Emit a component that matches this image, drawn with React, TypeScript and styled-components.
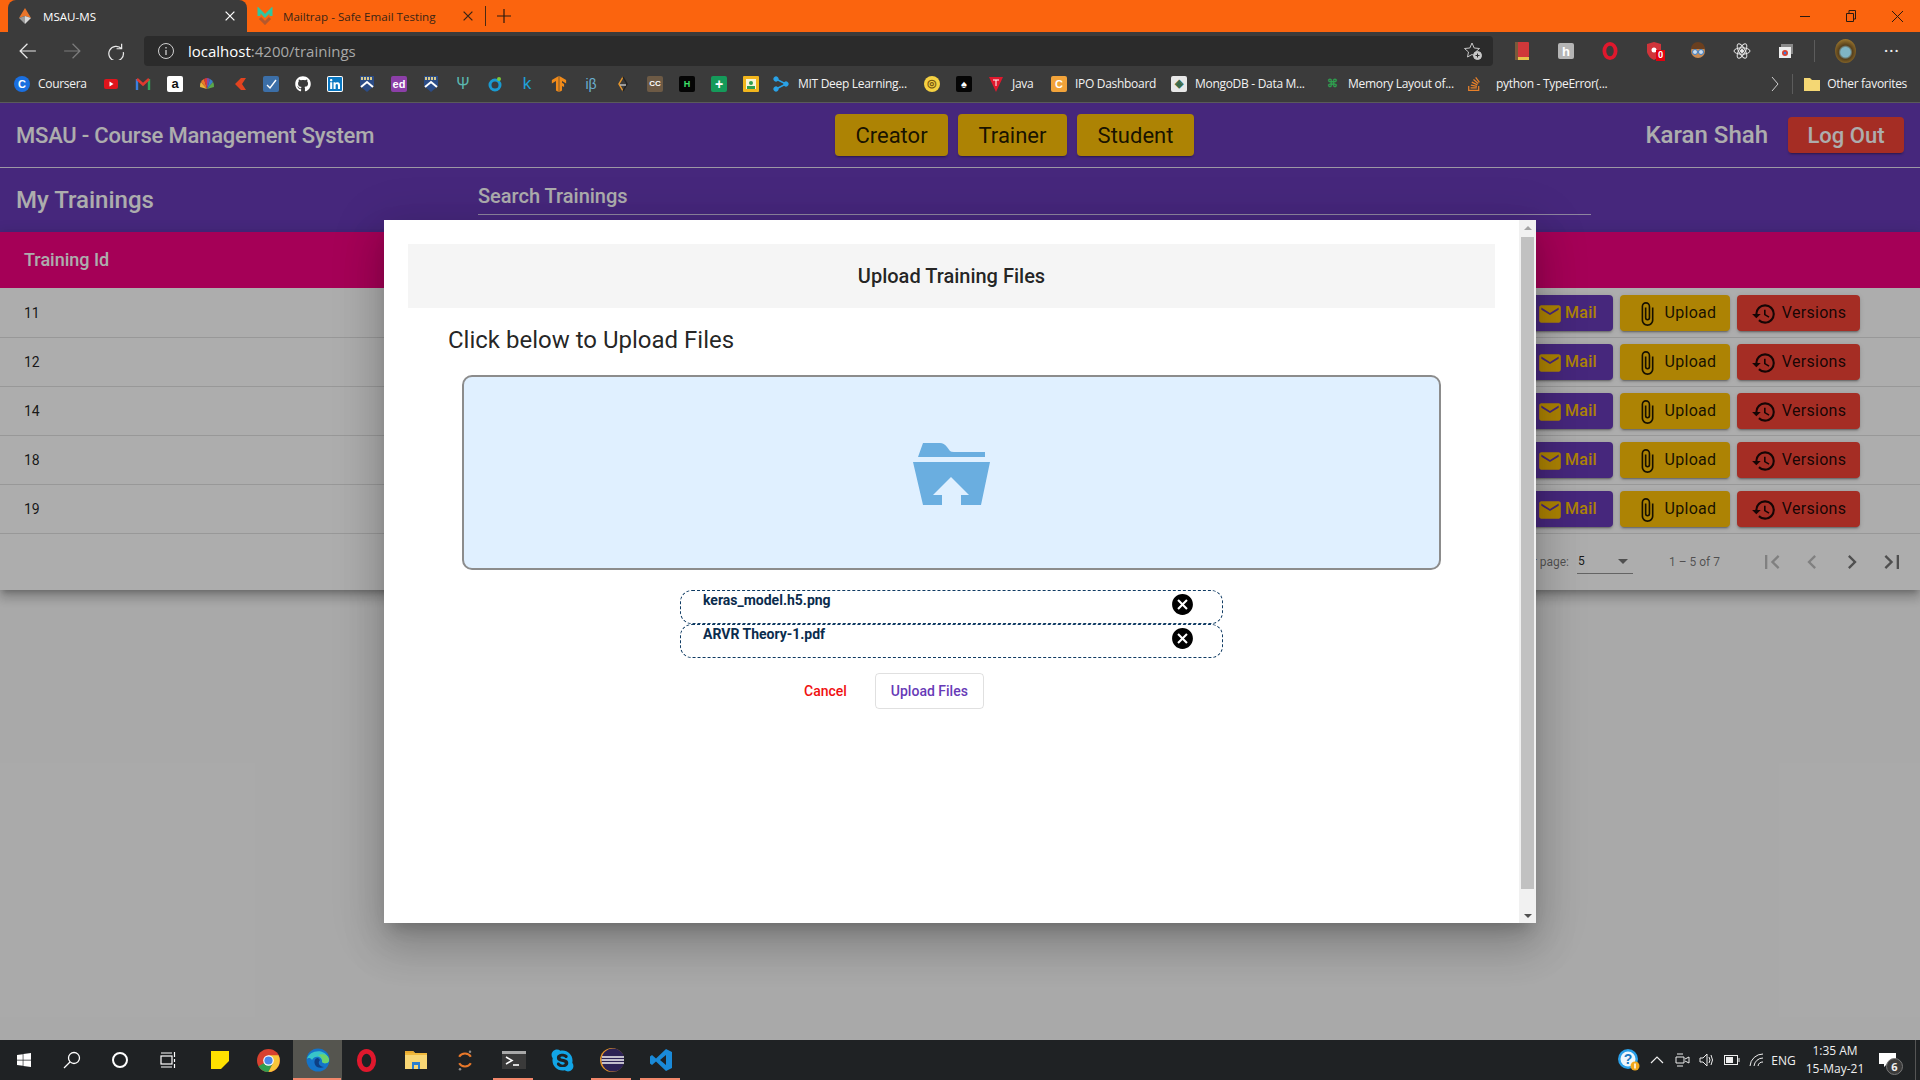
import React from "react";
import styled, { createGlobalStyle } from "styled-components";
import {
  MdAttachFile,
  MdCancel,
  MdChevronLeft,
  MdChevronRight,
  MdEmail,
  MdFirstPage,
  MdHistory,
  MdLastPage,
} from "react-icons/md";
import { FaGithub, FaLinkedin, FaSkype, FaStackOverflow, FaWindows } from "react-icons/fa";
import { SiTensorflow } from "react-icons/si";

const GlobalStyle = createGlobalStyle`
  html, body {
    margin: 0;
    padding: 0;
    height: 100%;
    overflow: hidden;
  }
  * {
    box-sizing: border-box;
  }
  #root {
    height: 100%;
  }
`;

const Shell = styled.div`
  display: flex;
  flex-direction: column;
  height: 100vh;
  font-family: Roboto, "Liberation Sans", sans-serif;
`;

/* browser chrome */

const TabStrip = styled.div`
  height: 32px;
  flex: none;
  background: #fb640e;
  display: flex;
  align-items: stretch;
  padding-left: 8px;
  font-family: "Open Sans", "Liberation Sans", sans-serif;
  font-size: 11.6px;
`;

const Tab = styled.div<{ $active?: boolean }>`
  width: ${(p) => (p.$active ? "239px" : "238px")};
  display: flex;
  align-items: center;
  padding: 0 12px 0 ${(p) => (p.$active ? "9px" : "10px")};
  gap: 10px;
  border-radius: 8px 8px 0 0;
  background: ${(p) => (p.$active ? "#3b3b3b" : "transparent")};
  color: ${(p) => (p.$active ? "#fff" : "#3a2415")};
`;

const TabTitle = styled.span`
  flex: 1;
  white-space: nowrap;
`;

const TabDivider = styled.div`
  width: 1px;
  height: 20px;
  background: #4a2a12;
  align-self: center;
`;

const NewTab = styled.div`
  width: 36px;
  display: flex;
  align-items: center;
  justify-content: center;
  color: #2b1a10;
`;

const WindowControls = styled.div`
  margin-left: auto;
  display: flex;
  align-items: center;
  color: #2b1a10;
`;

const WindowButton = styled.div`
  width: 46px;
  height: 32px;
  display: flex;
  align-items: center;
  justify-content: center;
`;

const Toolbar = styled.div`
  height: 38px;
  flex: none;
  background: #3b3b3b;
  display: flex;
  align-items: center;
  padding: 0 0 0 6px;
`;

const NavButton = styled.div`
  width: 44px;
  display: flex;
  justify-content: center;
`;

const AddressBar = styled.div`
  margin-left: 6px;
  width: 1349px;
  height: 30px;
  border-radius: 4px;
  background: #2b2b2b;
  display: flex;
  align-items: center;
  padding: 0 10px 0 14px;
  gap: 14px;
  font-family: "Open Sans", "Liberation Sans", sans-serif;
  font-size: 15px;
  color: #a8a8a8;
`;

const AddressText = styled.span`
  flex: 1;
`;

const Host = styled.span`
  color: #fff;
`;

const ExtensionRow = styled.div`
  display: flex;
  align-items: center;
  padding: 0 6px 0 7px;
`;

const Extension = styled.div`
  width: 44px;
  display: flex;
  justify-content: center;
  align-items: center;
  position: relative;
`;

const ExtensionBadge = styled.span`
  position: absolute;
  top: 8px;
  left: 24px;
  width: 9px;
  height: 11px;
  background: #e3000f;
  color: #fff;
  font-size: 9px;
  font-weight: 700;
  line-height: 11px;
  text-align: center;
`;

const ToolbarDivider = styled.div`
  width: 1px;
  height: 22px;
  background: #5c5c5c;
`;

const Avatar = styled.div`
  width: 21px;
  height: 24px;
  margin: 0 28px 0 20px;
  border-radius: 50%;
  background: radial-gradient(circle at 50% 55%, #7fb4c4 0 28%, #57401c 42%, #c79a3a 100%);
`;

const Dots = styled.span`
  color: #eee;
  font-size: 14px;
  letter-spacing: 1px;
  line-height: 10px;
  font-weight: 700;
`;

const BookmarkBar = styled.div`
  height: 33px;
  flex: none;
  background: #3b3b3b;
  border-bottom: 1px solid #5a5a5a;
  display: flex;
  align-items: center;
  padding: 0 0 5px 14px;
  font-family: "Open Sans", "Liberation Sans", sans-serif;
  font-size: 12px;
  letter-spacing: -0.3px;
  color: #f2f2f2;
`;

const Bookmark = styled.div<{ $width?: number; $pad?: number; $gap?: number }>`
  width: ${(p) => p.$width ?? 32}px;
  flex: none;
  display: flex;
  align-items: center;
  justify-content: ${(p) => (p.$width ? "flex-start" : "center")};
  padding-left: ${(p) => p.$pad ?? 0}px;
  gap: ${(p) => p.$gap ?? 8}px;
  white-space: nowrap;
`;

const Glyph = styled.span<{ $bg?: string; $fg?: string; $round?: boolean; $size?: number; $weight?: number }>`
  width: 16px;
  height: 16px;
  flex: none;
  display: inline-flex;
  align-items: center;
  justify-content: center;
  border-radius: ${(p) => (p.$round ? "50%" : "2px")};
  background: ${(p) => p.$bg ?? "transparent"};
  color: ${(p) => p.$fg ?? "#fff"};
  font-family: "Liberation Sans", sans-serif;
  font-size: ${(p) => p.$size ?? 11}px;
  font-weight: ${(p) => p.$weight ?? 700};
  letter-spacing: 0;
`;

const BookmarkEnd = styled.div`
  margin-left: auto;
  display: flex;
  align-items: center;
  gap: 7px;
  padding-right: 13px;
`;

const BarDivider = styled.div`
  width: 1px;
  height: 20px;
  background: #5c5c5c;
  margin: 0 4px 0 2px;
`;

/* the app behind the dialog */

const PageArea = styled.div`
  flex: 1;
  position: relative;
  overflow: hidden;
  background: #fafafa;
`;

const AppBar = styled.header`
  height: 65px;
  background: #673ab7;
  border-bottom: 1px solid #e8e0f4;
  display: flex;
  align-items: center;
  color: #fff;
  padding: 0 16px;
`;

const AppTitle = styled.h1`
  margin: 0;
  width: 819px;
  font-size: 22px;
  font-weight: 500;
  letter-spacing: -0.2px;
`;

const RoleButtons = styled.div`
  display: flex;
  gap: 10px;
`;

const RoleButton = styled.div<{ $width: number }>`
  width: ${(p) => p.$width}px;
  height: 42px;
  border-radius: 4px;
  background: #ffc107;
  color: rgba(0, 0, 0, 0.87);
  font-size: 22px;
  font-weight: 400;
  display: flex;
  align-items: center;
  justify-content: center;
  box-shadow: 0 3px 1px -2px rgba(0, 0, 0, 0.2), 0 2px 2px rgba(0, 0, 0, 0.14);
`;

const UserName = styled.span`
  margin-left: auto;
  font-size: 24px;
  font-weight: 500;
`;

const LogOut = styled.div`
  margin-left: 20px;
  width: 116px;
  height: 36px;
  border-radius: 4px;
  background: #f44336;
  color: #fff;
  font-size: 22px;
  font-weight: 500;
  display: flex;
  align-items: center;
  justify-content: center;
  box-shadow: 0 3px 1px -2px rgba(0, 0, 0, 0.2), 0 2px 2px rgba(0, 0, 0, 0.14);
`;

const SubBar = styled.div`
  height: 64px;
  background: #673ab7;
  color: #fff;
  display: flex;
  padding-left: 16px;
`;

const SubTitle = styled.h2`
  margin: 0;
  width: 462px;
  font-size: 24px;
  font-weight: 500;
  line-height: 64px;
`;

const SearchField = styled.div`
  width: 1113px;
  height: 47px;
  border-bottom: 1px solid rgba(255, 255, 255, 0.7);
  font-size: 20px;
  font-weight: 500;
  line-height: 56px;
  color: #fff;
`;

const TablePaper = styled.div`
  background: #fff;
  box-shadow: 0 5px 5px -3px rgba(0, 0, 0, 0.2), 0 8px 10px 1px rgba(0, 0, 0, 0.14),
    0 3px 14px 2px rgba(0, 0, 0, 0.12);
`;

const TableHead = styled.div`
  height: 57px;
  background: #f30080;
  border-bottom: 1px solid #fff;
  color: #fff;
  font-size: 18px;
  font-weight: 500;
  display: flex;
  align-items: center;
  padding: 0 0 2px 24px;
`;

const Row = styled.div`
  height: 49px;
  border-bottom: 1px solid rgba(0, 0, 0, 0.12);
  display: flex;
  align-items: center;
  padding: 0 60px 0 24px;
  font-size: 14px;
  color: rgba(0, 0, 0, 0.87);
`;

const RowId = styled.span`
  flex: 1;
`;

const RowActions = styled.div`
  display: flex;
  gap: 7px;
`;

const ActionButton = styled.div<{ $bg: string; $fg: string; $width: number; $tight?: boolean }>`
  width: ${(p) => p.$width}px;
  height: 36px;
  border-radius: 4px;
  background: ${(p) => p.$bg};
  color: ${(p) => p.$fg};
  font-size: 16px;
  font-weight: ${(p) => (p.$tight ? 500 : 400)};
  letter-spacing: 0.3px;
  display: flex;
  align-items: center;
  justify-content: center;
  gap: ${(p) => (p.$tight ? "2px" : "5px")};
  padding-bottom: 2px;
  box-shadow: 0 3px 1px -2px rgba(0, 0, 0, 0.2), 0 2px 2px rgba(0, 0, 0, 0.14),
    0 1px 5px rgba(0, 0, 0, 0.12);

  svg {
    font-size: 26px;
    flex: none;
    margin-top: 4px;
  }
`;

const Paginator = styled.div`
  height: 56px;
  display: flex;
  align-items: center;
  justify-content: flex-end;
  padding-right: 8px;
  font-size: 12px;
  color: rgba(0, 0, 0, 0.54);
`;

const PageSize = styled.div`
  width: 56px;
  margin: 0 36px 0 8px;
  padding: 0 5px 5px 1px;
  border-bottom: 1px solid rgba(0, 0, 0, 0.42);
  display: flex;
  justify-content: space-between;
  align-items: center;
  color: rgba(0, 0, 0, 0.87);
  position: relative;
  top: 2px;
`;

const SelectCaret = styled.span`
  width: 0;
  height: 0;
  border-left: 5px solid transparent;
  border-right: 5px solid transparent;
  border-top: 5px solid rgba(0, 0, 0, 0.54);
`;

const PageRange = styled.span`
  margin-right: 32px;
`;

const PageIcon = styled.div<{ $dim?: boolean }>`
  width: 40px;
  height: 40px;
  display: flex;
  align-items: center;
  justify-content: center;
  font-size: 28px;
  color: ${(p) => (p.$dim ? "rgba(0,0,0,0.26)" : "rgba(0,0,0,0.54)")};
`;

/* dialog */

const Backdrop = styled.div`
  position: absolute;
  inset: 0;
  background: rgba(0, 0, 0, 0.32);
  display: flex;
  align-items: center;
  justify-content: center;
`;

const Dialog = styled.div`
  width: 1152px;
  height: 703px;
  background: #fff;
  display: flex;
  box-shadow: 0 11px 15px -7px rgba(0, 0, 0, 0.2), 0 24px 38px 3px rgba(0, 0, 0, 0.14),
    0 9px 46px 8px rgba(0, 0, 0, 0.12);
`;

const DialogBody = styled.div`
  flex: 1;
  padding: 24px;
  min-width: 0;
`;

const DialogHeader = styled.div`
  height: 64px;
  background: #f5f5f5;
  color: rgba(0, 0, 0, 0.87);
  font-size: 20px;
  font-weight: 500;
  display: flex;
  align-items: center;
  justify-content: center;
`;

const DialogLead = styled.h3`
  margin: 16px 0 0 40px;
  font-size: 24px;
  line-height: 32px;
  font-weight: 400;
  color: rgba(0, 0, 0, 0.87);
`;

const DropZone = styled.div`
  width: 979px;
  height: 195px;
  margin: 19px auto 0;
  padding-top: 3px;
  background: #e0f0ff;
  border: 2px solid #8c8c8c;
  border-radius: 10px;
  display: flex;
  align-items: center;
  justify-content: center;
`;

const FileList = styled.div`
  width: 543px;
  margin: 20px auto 0;
  display: flex;
  flex-direction: column;
`;

const FileItem = styled.div`
  height: 34px;
  border: 1px dashed #0f3b63;
  border-radius: 12px;
  padding: 1px 27px 0 22px;
  display: flex;
  justify-content: space-between;
  font-size: 14px;
  font-weight: 700;
  line-height: 16px;
  color: #0b2c4d;
  white-space: nowrap;

  svg {
    font-size: 25px;
    color: #000;
  }
`;

const DialogActions = styled.div`
  display: flex;
  align-items: center;
  gap: 12px;
  margin: 15px 0 0 380px;
`;

const TextButton = styled.div`
  height: 36px;
  padding: 0 16px;
  display: flex;
  align-items: center;
  color: #f01010;
  font-size: 14px;
  font-weight: 500;
`;

const OutlineButton = styled.div`
  height: 36px;
  width: 109px;
  display: flex;
  align-items: center;
  justify-content: center;
  border: 1px solid rgba(0, 0, 0, 0.12);
  border-radius: 4px;
  color: #673ab7;
  font-size: 14px;
  font-weight: 500;
`;

const ScrollTrack = styled.div`
  width: 17px;
  flex: none;
  background: #f1f1f1;
  display: flex;
  flex-direction: column;
  align-items: center;
`;

const ScrollArrow = styled.div<{ $down?: boolean }>`
  width: 0;
  height: 0;
  margin: ${(p) => (p.$down ? "auto 0 5px" : "6px 0 5px")};
  border-left: 4px solid transparent;
  border-right: 4px solid transparent;
  ${(p) => (p.$down ? "border-top: 4px solid #505050;" : "border-bottom: 4px solid #a3a3a3;")}
`;

const ScrollThumb = styled.div`
  width: 13px;
  height: 652px;
  margin-top: 2px;
  background: #c1c1c1;
`;

/* taskbar */

const Taskbar = styled.footer`
  height: 40px;
  flex: none;
  background: #1f2224;
  display: flex;
  align-items: stretch;
  color: #fff;
  font-family: "Open Sans", "Liberation Sans", sans-serif;
`;

const SystemCell = styled.div`
  width: 48px;
  flex: none;
  display: flex;
  align-items: center;
  justify-content: center;
`;

const AppGroup = styled.div`
  display: flex;
  padding-left: 3px;
`;

const TaskCell = styled.div<{ $active?: boolean; $running?: boolean }>`
  width: 49px;
  flex: none;
  display: flex;
  align-items: center;
  justify-content: center;
  position: relative;
  background: ${(p) => (p.$active ? "#55554f" : "transparent")};

  &::after {
    content: "";
    display: ${(p) => (p.$running || p.$active ? "block" : "none")};
    position: absolute;
    bottom: 0;
    height: 2px;
    left: ${(p) => (p.$active ? "0" : "4px")};
    right: ${(p) => (p.$active ? "1px" : "5px")};
    background: #f2876b;
  }
`;

const TrayGroup = styled.div`
  margin-left: auto;
  display: flex;
  align-items: center;
  padding-right: 4px;
  font-size: 12px;
  color: #f0f0f0;
`;

const TrayIcon = styled.div<{ $width?: number }>`
  width: ${(p) => p.$width ?? 25}px;
  display: flex;
  justify-content: center;
  align-items: center;
`;

const Clock = styled.div`
  width: 60px;
  margin-left: 7px;
  text-align: center;
  line-height: 18px;
  font-size: 12px;
  white-space: nowrap;
`;

const Notifications = styled.div`
  width: 49px;
  height: 40px;
  margin-left: 2px;
  padding-right: 8px;
  border-right: 1px solid #555;
  position: relative;
  display: flex;
  align-items: center;
  justify-content: center;
`;

const NotifyCount = styled.span`
  position: absolute;
  left: 19px;
  top: 18px;
  width: 17px;
  height: 17px;
  border-radius: 50%;
  background: #3a3a3a;
  border: 1px solid #777;
  font-size: 11px;
  font-weight: 700;
  line-height: 15px;
  text-align: center;
`;

/* small drawings */

const FolderUpload = () => (
  <svg width="78" height="63" viewBox="0 0 78 63" fill="#6aaee0">
    <path d="M10 0 H27 Q31 0 34 4 L37 8 Q38 9 41 9 L72 9 V14 H5 z" />
    <path d="M0 19 H77 L68 62 H48 V52 H56 L38 34 L20 52 H29 V62 H10 z" />
  </svg>
);

const MsauFavicon = () => (
  <svg width="16" height="18" viewBox="0 0 16 18">
    <path d="M8 1 L14 11 L8 9 L2 11 z" fill="#e8742a" />
    <path d="M2 11 L8 9 V17 z" fill="#9a9a9a" />
    <path d="M14 11 L8 9 V17 z" fill="#d8d8d8" />
  </svg>
);

const MailtrapFavicon = () => (
  <svg width="16" height="18" viewBox="0 0 16 18" fill="none" strokeWidth="3">
    <path d="M2 9 V3 L8 9 L14 3 V9" stroke="#2fc6a0" />
    <path d="M3 11 L8 16 L13 11" stroke="#b5582c" />
  </svg>
);

const Stroke = ({ d, size = 16, color = "#fff", width = 1.4 }: { d: string; size?: number; color?: string; width?: number }) => (
  <svg width={size} height={size} viewBox="0 0 16 16" fill="none" stroke={color} strokeWidth={width}>
    <path d={d} />
  </svg>
);

const TabClose = () => <Stroke size={10} d="M1 1 L15 15 M15 1 L1 15" color="currentColor" width={2} />;

const Shield = () => (
  <svg width="16" height="18" viewBox="0 0 16 18">
    <path d="M1 1 H15 V11 L8 17 L1 11 z" fill="#2b4c86" />
    <path d="M2 12 L8 7 L14 12" stroke="#fff" strokeWidth="2" fill="none" />
    <path d="M2 3.500 H14" stroke="#d8c98c" strokeWidth="3" strokeDasharray="2 1" />
  </svg>
);

const Peacock = () => (
  <svg width="18" height="16" viewBox="0 0 18 16">
    <path d="M9 13 L2 11 A7 7 0 0 1 3 6 z" fill="#e8b53a" />
    <path d="M9 13 L3 6 A7 7 0 0 1 6 3 z" fill="#e8782a" />
    <path d="M9 13 L6 3 A7 7 0 0 1 9 2 z" fill="#d8383a" />
    <path d="M9 13 L9 2 A7 7 0 0 1 12 3 z" fill="#7a4fa8" />
    <path d="M9 13 L12 3 A7 7 0 0 1 15 6 z" fill="#3a7fc8" />
    <path d="M9 13 L15 6 A7 7 0 0 1 16 11 z" fill="#5aa84a" />
  </svg>
);

const ChromeLogo = () => (
  <svg width="23" height="23" viewBox="0 0 24 24">
    <circle cx="12" cy="12" r="12" fill="#d8412f" />
    <path d="M12 12 L1.600 18 A12 12 0 0 0 12 24 L17 14 z" fill="#2f9e4f" />
    <path d="M12 6.500 H22.400 A12 12 0 0 1 12 24 L17 14 z" fill="#f7c63a" />
    <circle cx="12" cy="12" r="5.500" fill="#fff" />
    <circle cx="12" cy="12" r="4.300" fill="#4a86e8" />
  </svg>
);

const EdgeLogo = () => (
  <svg width="24" height="24" viewBox="0 0 24 24">
    <circle cx="12" cy="12" r="11.500" fill="#1473c8" />
    <path d="M1 11 C3 2 20 -1 23 12 C23 16 18 16 16 14 C17 9 9 6 6 12 C4 9 2 10 1 11 z" fill="#38c5c9" />
    <path d="M23 12 C23 16 18 16 16 14 C17 11 15 8 12 7 C17 5 23 7 23 12 z" fill="#6cd36c" />
    <path d="M12 10 C8 10 7 16 11 19 C13 20 16 20 18 19 C14 19 11 15 14 12 z" fill="#0d3f84" />
  </svg>
);

const OperaLogo = ({ size = 23 }: { size?: number }) => (
  <svg width={size} height={size} viewBox="0 0 24 24" fill="none">
    <ellipse cx="12" cy="12" rx="7.500" ry="9.500" stroke="#e0182d" strokeWidth="5" />
  </svg>
);

const FolderLogo = () => (
  <svg width="22" height="18" viewBox="0 0 22 18">
    <path d="M0 0 H8 L10 2 H22 V18 H0 z" fill="#f8d775" />
    <path d="M0 0 H8 L10 2 H0 z" fill="#e8a92e" />
    <rect y="2" width="22" height="2" fill="#f0b93c" />
    <path d="M7 18 V11 H15 V18 h-2 v-4 h-4 v4 z" fill="#2a7fd0" />
  </svg>
);

const JupyterLogo = () => (
  <svg width="20" height="24" viewBox="0 0 24 26" fill="none">
    <path d="M5 9 C8 4 16 4 19 9" stroke="#e8782a" strokeWidth="2.500" />
    <path d="M5 17 C8 22 16 22 19 17" stroke="#e8782a" strokeWidth="2.500" />
    <circle cx="18" cy="3" r="1.500" fill="#8a8a8a" />
    <circle cx="6" cy="24" r="1.500" fill="#8a8a8a" />
  </svg>
);

const TerminalLogo = () => (
  <svg width="24" height="18" viewBox="0 0 24 18">
    <rect width="24" height="18" fill="#3a3a3a" />
    <rect width="24" height="3" fill="#a8a8a8" />
    <path d="M4 6 L10 9.500 L4 13" stroke="#fff" strokeWidth="1.600" fill="none" />
    <path d="M11 14 H17" stroke="#fff" strokeWidth="1.600" />
  </svg>
);

const EclipseLogo = () => (
  <svg width="24" height="24" viewBox="0 0 24 24">
    <circle cx="12" cy="12" r="12" fill="#e8962a" />
    <circle cx="13" cy="12" r="11.500" fill="#2c2255" />
    <path d="M2 9 H24 M1.500 12 H24.500 M2 15 H24" stroke="#f2f2f2" strokeWidth="1.500" />
  </svg>
);

const VsCodeLogo = () => (
  <svg width="24" height="24" viewBox="0 0 24 24">
    <path d="M17 1 L23 4 V20 L17 23 L7 13.500 L3 17 L1 15.500 V8.500 L3 7 L7 10.500 z M17 7 L11 12 L17 17 z" fill="#1a8ad8" fillRule="evenodd" />
  </svg>
);

const ProfileExt = () => (
  <svg width="16" height="20" viewBox="0 0 16 20">
    <circle cx="8" cy="10" r="7" fill="#c88a52" />
    <path d="M1 8 A7 7 0 0 1 15 8 z" fill="#6a3f1f" />
    <circle cx="5" cy="11" r="2.500" fill="#cde" stroke="#3a7fc8" />
    <circle cx="11" cy="11" r="2.500" fill="#cde" stroke="#3a7fc8" />
  </svg>
);

const ReactExt = () => (
  <svg width="18" height="18" viewBox="0 0 18 18" fill="none" stroke="#e8e8e8">
    <ellipse cx="9" cy="9" rx="8" ry="3.200" />
    <ellipse cx="9" cy="9" rx="8" ry="3.200" transform="rotate(60 9 9)" />
    <ellipse cx="9" cy="9" rx="8" ry="3.200" transform="rotate(120 9 9)" />
    <circle cx="9" cy="9" r="1.500" fill="#e8e8e8" />
  </svg>
);

const HelpIcon = () => (
  <svg width="22" height="22" viewBox="0 0 22 22">
    <circle cx="10" cy="10" r="10" fill="#2aa0e8" />
    <circle cx="10" cy="10" r="7.500" fill="#eef7fc" />
    <text x="10" y="15" textAnchor="middle" fontSize="14" fontWeight="700" fontFamily="Liberation Sans" fill="#1a78c2">?</text>
    <circle cx="17" cy="17" r="4.500" fill="#f2a81d" />
    <path d="M17 14.500 V19.500" stroke="#fff" strokeWidth="1.500" />
  </svg>
);

const NetworkIcon = () => (
  <svg width="16" height="16" viewBox="0 0 16 16" stroke="#2aa3e8" fill="#2aa3e8">
    <path d="M3 3 L13 8 L3 13" fill="none" strokeWidth="1.500" />
    <circle cx="3" cy="3" r="2.200" />
    <circle cx="13" cy="8" r="2.200" />
    <circle cx="3" cy="13" r="2.200" />
  </svg>
);

const bookmarkIcons: React.ReactNode[] = [
  <svg width="16" height="16" viewBox="0 0 16 16" key="yt"><rect x="1" y="3" width="14" height="10" rx="2" fill="#e0141c" /><path d="M6.500 5.500 L10.500 8 L6.500 10.500 z" fill="#fff" /></svg>,
  <svg width="16" height="16" viewBox="0 0 16 16" key="gm" fill="none" strokeWidth="2.400"><path d="M2 14 V3" stroke="#3a7fe0" /><path d="M14 14 V3" stroke="#2fa85a" /><path d="M2 3 L8 8.500 L14 3" stroke="#e0392f" /></svg>,
  <Glyph key="amz" $bg="#fff" $fg="#111" $size={13}>a</Glyph>,
  <Peacock key="nbc" />,
  <svg width="16" height="16" viewBox="0 0 16 16" key="ch"><path d="M10 2 H15 L11 8 L15 14 H10 L4 8 z" fill="#e2431f" /></svg>,
  <Glyph key="doc" $bg="#3c6fa8"><Stroke d="M4 9 L7 12 L13 4" /></Glyph>,
  <FaGithub key="gh" size={16} color="#fff" />,
  <Glyph key="li" $bg="#fff"><FaLinkedin size={16} color="#0a78c2" /></Glyph>,
  <Shield key="y1" />,
  <Glyph key="ed" $bg="#8c3fa8">ed</Glyph>,
  <Shield key="y2" />,
  <Glyph key="psi" $fg="#5ab8b0" $size={16} $weight={400}>Ψ</Glyph>,
  <svg width="16" height="16" viewBox="0 0 16 16" key="ring" fill="none"><circle cx="8" cy="9" r="5" stroke="#1a9ad0" strokeWidth="3" /><circle cx="12" cy="3" r="2" fill="#7ac83a" /></svg>,
  <Glyph key="kg" $fg="#20a0d8" $size={17} $weight={400}>k</Glyph>,
  <SiTensorflow key="tf" size={16} color="#f08a1a" />,
  <Glyph key="ib" $fg="#6ab0d0" $size={14} $weight={400}>iβ</Glyph>,
  <svg width="16" height="16" viewBox="0 0 16 16" key="dia" fill="none" strokeWidth="1.500"><path d="M8 1 L4 8 L8 15" stroke="#e8962a" /><path d="M8 1 L12 8 L8 15" stroke="#222" /><path d="M5 9 H11" stroke="#bbb" /></svg>,
  <Glyph key="cc" $bg="#6d5a45" $size={8}>CC</Glyph>,
  <Glyph key="hn" $bg="#050505" $fg="#3fe06a" $size={9}>H</Glyph>,
  <Glyph key="plus" $bg="#159a5a" $size={14}>+</Glyph>,
  <svg width="16" height="16" viewBox="0 0 16 16" key="gc"><rect width="16" height="16" rx="1" fill="#f2b61d" /><rect x="3" y="3" width="10" height="10" fill="#f8f4d8" /><circle cx="8" cy="7" r="2" fill="#2f9e4f" /><rect x="4" y="10" width="8" height="3" fill="#2f9e4f" /></svg>,
];

const trainingIds = [11, 12, 14, 18, 19];

export default function App() {
  return (
    <Shell>
      <GlobalStyle />

      <TabStrip>
        <Tab $active>
          <MsauFavicon />
          <TabTitle>MSAU-MS</TabTitle>
          <TabClose />
        </Tab>
        <Tab>
          <MailtrapFavicon />
          <TabTitle>Mailtrap - Safe Email Testing</TabTitle>
          <TabClose />
        </Tab>
        <TabDivider />
        <NewTab>
          <svg width="14" height="14" viewBox="0 0 14 14" stroke="currentColor" strokeWidth="1.200"><path d="M7 0 V14 M0 7 H14" /></svg>
        </NewTab>
        <WindowControls>
          <WindowButton>
            <svg width="10" height="10" viewBox="0 0 10 10" stroke="currentColor"><path d="M0 5.500 H10" /></svg>
          </WindowButton>
          <WindowButton>
            <svg width="10" height="12" viewBox="0 0 10 12" fill="none" stroke="currentColor"><path d="M0.500 3.500 H7.500 V11.500 H0.500 z M3 3 V0.500 H9.500 V9 H8" /></svg>
          </WindowButton>
          <WindowButton>
            <svg width="11" height="11" viewBox="0 0 11 11" stroke="currentColor"><path d="M0 0 L11 11 M11 0 L0 11" /></svg>
          </WindowButton>
        </WindowControls>
      </TabStrip>

      <Toolbar>
        <NavButton><Stroke size={18} color="#e8e8e8" width={1.1} d="M15 8 H1 M7.500 1.500 L1 8 L7.500 14.500" /></NavButton>
        <NavButton><Stroke size={18} color="#7c7c7c" width={1.1} d="M1 8 H15 M8.500 1.500 L15 8 L8.500 14.500" /></NavButton>
        <NavButton><Stroke size={18} color="#e8e8e8" width={1.1} d="M13 1.500 V6 H8.500 M13 6 A6.500 6.500 0 1 0 14.500 9" /></NavButton>
        <AddressBar>
          <svg width="16" height="16" viewBox="0 0 16 16" fill="none" stroke="#d0d0d0">
            <circle cx="8" cy="8" r="7.500" />
            <path d="M8 7 V12 M8 4 V5.500" strokeWidth="1.300" />
          </svg>
          <AddressText>
            <Host>localhost</Host>:4200/trainings
          </AddressText>
          <svg width="20" height="20" viewBox="0 0 20 20" fill="none" stroke="#c8c8c8">
            <path d="M9 2 L11.200 7 L16.500 7.500 L12.500 11 L13.500 16 L9 13.500 L4.500 16 L5.500 11 L1.500 7.500 L6.800 7 z" />
            <circle cx="14.500" cy="14.500" r="4" fill="#c8c8c8" />
            <path d="M14.500 12.500 V16.500 M12.500 14.500 H16.500" stroke="#2b2b2b" />
          </svg>
        </AddressBar>
        <ExtensionRow>
          <Extension>
            <svg width="14" height="18" viewBox="0 0 14 18"><rect width="14" height="15" rx="1" fill="#d0383a" /><rect y="15" width="14" height="3" fill="#e8c24a" /><rect width="3" height="18" fill="#7a5a3a" /></svg>
          </Extension>
          <Extension>
            <Glyph $bg="#b5b5b5" $size={13}>h</Glyph>
          </Extension>
          <Extension><OperaLogo size={18} /></Extension>
          <Extension>
            <svg width="16" height="18" viewBox="0 0 16 18"><path d="M1 2 L8 0 L15 2 V10 Q14 15 8 18 Q2 15 1 10 z" fill="#d0343a" /><circle cx="8" cy="8" r="2.500" fill="#fff" /></svg>
            <ExtensionBadge>0</ExtensionBadge>
          </Extension>
          <Extension><ProfileExt /></Extension>
          <Extension><ReactExt /></Extension>
          <Extension>
            <svg width="16" height="16" viewBox="0 0 16 16"><rect x="3" y="1" width="12" height="10" fill="#8a8a8a" /><rect x="1" y="4" width="12" height="11" fill="#eee" /><circle cx="7" cy="10" r="3" fill="#d8412f" /><circle cx="7" cy="10" r="1.300" fill="#3a7fe0" /></svg>
          </Extension>
        </ExtensionRow>
        <ToolbarDivider />
        <Avatar />
        <Dots>···</Dots>
      </Toolbar>

      <BookmarkBar>
        <Bookmark $width={81}>
          <Glyph $bg="#1a6fe0" $round>C</Glyph>
          Coursera
        </Bookmark>
        {bookmarkIcons.map((icon, i) => (
          <Bookmark key={i}>{icon}</Bookmark>
        ))}
        <Bookmark $width={149} $pad={6} $gap={9}>
          <NetworkIcon />
          MIT Deep Learning...
        </Bookmark>
        <Bookmark><Glyph $bg="#f5d142" $fg="#7a5a10" $round>◎</Glyph></Bookmark>
        <Bookmark><Glyph $bg="#050505">♠</Glyph></Bookmark>
        <Bookmark $width={63} $pad={8}>
          <svg width="16" height="16" viewBox="0 0 16 16"><path d="M1 1 H15 L8 16 z" fill="#e0182d" /><path d="M5 4 H11 M8 4 V10" stroke="#fff" /></svg>
          Java
        </Bookmark>
        <Bookmark $width={120} $pad={8}>
          <Glyph $bg="#f2a33a">C</Glyph>
          IPO Dashboard
        </Bookmark>
        <Bookmark $width={153} $pad={8}>
          <Glyph $bg="#e8e8e8" $fg="#3a6a4a">◈</Glyph>
          MongoDB - Data M...
        </Bookmark>
        <Bookmark $width={142} $pad={8}>
          <Glyph $fg="#2f9e4f">⌘</Glyph>
          Memory Layout of...
        </Bookmark>
        <Bookmark $width={150} $pad={8} $gap={14}>
          <FaStackOverflow size={16} color="#e8812a" />
          python - TypeError(...
        </Bookmark>
        <BookmarkEnd>
          <Stroke size={16} color="#d0d0d0" d="M5 1 L11 8 L5 15" width={1} />
          <BarDivider />
          <svg width="16" height="16" viewBox="0 0 16 16"><path d="M0 2 H6 L8 4 H16 V15 H0 z" fill="#f4d774" /></svg>
          Other favorites
        </BookmarkEnd>
      </BookmarkBar>

      <PageArea>
        <AppBar>
          <AppTitle>MSAU - Course Management System</AppTitle>
          <RoleButtons>
            <RoleButton $width={113}>Creator</RoleButton>
            <RoleButton $width={109}>Trainer</RoleButton>
            <RoleButton $width={117}>Student</RoleButton>
          </RoleButtons>
          <UserName>Karan Shah</UserName>
          <LogOut>Log Out</LogOut>
        </AppBar>
        <SubBar>
          <SubTitle>My Trainings</SubTitle>
          <SearchField>Search Trainings</SearchField>
        </SubBar>
        <TablePaper>
          <TableHead>Training Id</TableHead>
          {trainingIds.map((id) => (
            <Row key={id}>
              <RowId>{id}</RowId>
              <RowActions>
                <ActionButton $bg="#673ab7" $fg="#ffc107" $width={92} $tight>
                  <MdEmail />
                  Mail
                </ActionButton>
                <ActionButton $bg="#ffc107" $fg="rgba(0,0,0,0.87)" $width={110}>
                  <MdAttachFile />
                  Upload
                </ActionButton>
                <ActionButton $bg="#f44336" $fg="rgba(0,0,0,0.87)" $width={123}>
                  <MdHistory />
                  Versions
                </ActionButton>
              </RowActions>
            </Row>
          ))}
          <Paginator>
            <span>Items per page:</span>
            <PageSize>
              5
              <SelectCaret />
            </PageSize>
            <PageRange>1 – 5 of 7</PageRange>
            <PageIcon $dim><MdFirstPage /></PageIcon>
            <PageIcon $dim><MdChevronLeft /></PageIcon>
            <PageIcon><MdChevronRight /></PageIcon>
            <PageIcon><MdLastPage /></PageIcon>
          </Paginator>
        </TablePaper>

        <Backdrop>
          <Dialog>
            <DialogBody>
              <DialogHeader>Upload Training Files</DialogHeader>
              <DialogLead>Click below to Upload Files</DialogLead>
              <DropZone>
                <FolderUpload />
              </DropZone>
              <FileList>
                <FileItem>
                  keras_model.h5.png
                  <MdCancel />
                </FileItem>
                <FileItem>
                  ARVR Theory-1.pdf
                  <MdCancel />
                </FileItem>
              </FileList>
              <DialogActions>
                <TextButton>Cancel</TextButton>
                <OutlineButton>Upload Files</OutlineButton>
              </DialogActions>
            </DialogBody>
            <ScrollTrack>
              <ScrollArrow />
              <ScrollThumb />
              <ScrollArrow $down />
            </ScrollTrack>
          </Dialog>
        </Backdrop>
      </PageArea>

      <Taskbar>
        <SystemCell><FaWindows size={16} /></SystemCell>
        <SystemCell>
          <svg width="18" height="18" viewBox="0 0 18 18" fill="none" stroke="#fff" strokeWidth="1.300"><circle cx="11" cy="7" r="5.500" /><path d="M7 11 L1 17" /></svg>
        </SystemCell>
        <SystemCell>
          <svg width="18" height="18" viewBox="0 0 18 18" fill="none" stroke="#fff" strokeWidth="2"><circle cx="9" cy="9" r="7" /></svg>
        </SystemCell>
        <SystemCell>
          <svg width="18" height="18" viewBox="0 0 18 18" fill="none" stroke="#fff" strokeWidth="1.200"><rect x="2" y="5" width="11" height="8" /><path d="M2 2 H13 M2 16 H13 M15.500 1 V6 M15.500 8 V11 M15.500 13 V17" /></svg>
        </SystemCell>
        <AppGroup>
          <TaskCell>
            <svg width="18" height="18" viewBox="0 0 18 18"><rect width="18" height="18" fill="#ffe100" /><path d="M18 10 V18 H10 z" fill="#222" /></svg>
          </TaskCell>
          <TaskCell><ChromeLogo /></TaskCell>
          <TaskCell $active><EdgeLogo /></TaskCell>
          <TaskCell><OperaLogo /></TaskCell>
          <TaskCell><FolderLogo /></TaskCell>
          <TaskCell><JupyterLogo /></TaskCell>
          <TaskCell $running><TerminalLogo /></TaskCell>
          <TaskCell><FaSkype size={25} color="#12a5e6" /></TaskCell>
          <TaskCell $running><EclipseLogo /></TaskCell>
          <TaskCell $running><VsCodeLogo /></TaskCell>
        </AppGroup>
        <TrayGroup>
          <TrayIcon $width={30}><HelpIcon /></TrayIcon>
          <TrayIcon><Stroke d="M2 11 L8 5 L14 11" color="#eee" width={1.2} /></TrayIcon>
          <TrayIcon>
            <Stroke d="M2 5 H10 V11 H2 z M11 7 L15 5 V11 L11 9 M3 2 H9 M3 14 H9" color="#eee" width={1} />
          </TrayIcon>
          <TrayIcon>
            <Stroke d="M1 6 H4 L8 2 V14 L4 10 H1 z M10 5 Q12 8 10 11 M12 3 Q15 8 12 13" color="#eee" width={1} />
          </TrayIcon>
          <TrayIcon>
            <svg width="16" height="10" viewBox="0 0 16 10" fill="none" stroke="#eee"><rect x="0.500" y="0.500" width="13" height="9" /><rect x="2" y="2" width="7" height="6" fill="#eee" stroke="none" /><path d="M15 3 V7" /></svg>
          </TrayIcon>
          <TrayIcon>
            <Stroke d="M1 14 A13 13 0 0 1 14 2 M5 14 A9 9 0 0 1 14 6 M9 14 A5 5 0 0 1 14 10" color="#eee" width={1} />
          </TrayIcon>
          <TrayIcon $width={29}>ENG</TrayIcon>
          <Clock>
            1:35 AM
            <br />
            15-May-21
          </Clock>
          <Notifications>
            <svg width="17" height="14" viewBox="0 0 17 14"><path d="M0 0 H17 V11 H8 L5 14 V11 H0 z" fill="#fff" /></svg>
            <NotifyCount>6</NotifyCount>
          </Notifications>
        </TrayGroup>
      </Taskbar>
    </Shell>
  );
}
